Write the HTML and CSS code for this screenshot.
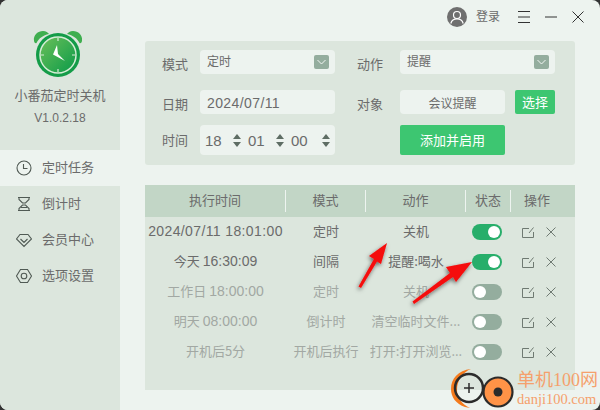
FILE: index.html
```html
<!DOCTYPE html>
<html lang="zh">
<head>
<meta charset="utf-8">
<title>小番茄定时关机</title>
<link rel="stylesheet" href="styles.css">
</head>
<body>
<div class="window">
  <aside class="sidebar">
    <div class="brand">
      <svg class="logo" viewBox="0 0 50 50" width="50" height="50">
        <defs><linearGradient id="g" x1="0" y1="0" x2="1" y2="1"><stop offset="0" stop-color="#6cc05a"/><stop offset="1" stop-color="#0a9a48"/></linearGradient></defs>
        <path d="M1 13C0 7 5 3 10 3c3 0 5 1.500 6 3C10 7.500 6 10 3.500 15 2.500 15.500 1.500 15 1 13z" fill="#3fae4f"/>
        <path d="M49 13C50 7 45 3 40 3c-3 0-5 1.500-6 3 6 1.500 10 4 12.500 9 1 .5 2 0 2.500-2z" fill="#3fae4f"/>
        <circle cx="25" cy="27" r="22" fill="#149c48"/>
        <circle cx="25" cy="27" r="18" fill="url(#g)" stroke="#d5ecd5" stroke-width="1.500"/>
        <path d="M25 10v3M25 41v3M8 27h3M39 27h3" stroke="#d5ecd5" stroke-width="1.200"/>
        <path d="M24 17L20 26.500 32 33 25 26z" fill="#fff"/>
      </svg>
      <div class="app-name">小番茄定时关机</div>
      <div class="version">V1.0.2.18</div>
    </div>
    <nav class="nav">
      <a class="nav-item active">
        <svg class="nav-icon" viewBox="0 0 16 16"><circle cx="8" cy="8" r="7"/><path d="M7.500 4v4.500h4"/></svg>
        <span class="nav-text">定时任务</span>
      </a>
      <a class="nav-item">
        <svg class="nav-icon" viewBox="0 0 16 16"><path d="M2 1.500h12M2 14.500h12M3 1.500v2L6.500 7h3L13 3.500v-2M3 14.500v-2L6.500 9h3l3.500 3.500v2M5 11.500h6"/></svg>
        <span class="nav-text">倒计时</span>
      </a>
      <a class="nav-item">
        <svg class="nav-icon" viewBox="0 0 16 16"><path d="M4 2.500h8L15.500 7 8 14.500.5 7zM4.500 7L8 10.500 11.500 7"/></svg>
        <span class="nav-text">会员中心</span>
      </a>
      <a class="nav-item">
        <svg class="nav-icon" viewBox="0 0 16 16"><path d="M4.500 1.500h7L15.500 8l-4 6.500h-7L.5 8z"/><circle cx="8" cy="8" r="2.800"/></svg>
        <span class="nav-text">选项设置</span>
      </a>
    </nav>
  </aside>

  <main class="main">
    <header class="topbar">
      <svg class="avatar" viewBox="0 0 20 20" width="20" height="20"><circle cx="10" cy="10" r="10" fill="#6f6f6f"/><circle cx="10" cy="8" r="3.500" fill="none" stroke="#fff" stroke-width="1.200"/><path d="M3.800 16.500c.8-3 3-4.600 6.200-4.600s5.400 1.600 6.200 4.600" fill="none" stroke="#fff" stroke-width="1.200"/></svg>
      <span class="login">登录</span>
      <svg class="win-btn first" viewBox="0 0 12 12"><path d="M0 .5h12M0 6h12M0 11.500h12"/></svg>
      <svg class="win-btn" viewBox="0 0 12 12"><path d="M0 6h12"/></svg>
      <svg class="win-btn" viewBox="0 0 12 12"><path d="M.5.500l11 11M11.500.5l-11 11"/></svg>
    </header>

    <section class="form">
      <div class="form-row">
        <label class="form-label">模式</label>
        <div class="field select left-field"><span>定时</span><i class="drop"><svg viewBox="0 0 15 14"><path d="M3.500 5l4 4 4-4"/></svg></i></div>
        <label class="form-label right-label">动作</label>
        <div class="field select right-field"><span>提醒</span><i class="drop"><svg viewBox="0 0 15 14"><path d="M3.500 5l4 4 4-4"/></svg></i></div>
      </div>
      <div class="form-row second">
        <label class="form-label">日期</label>
        <div class="field date left-field">2024/07/11</div>
        <label class="form-label right-label">对象</label>
        <div class="target right-field">
          <div class="field center">会议提醒</div>
          <button class="pick">选择</button>
        </div>
      </div>
      <div class="form-row third">
        <label class="form-label time-label">时间</label>
        <div class="field time left-field">
          <span class="num">18</span><i class="spin"></i>
          <span class="num">01</span><i class="spin"></i>
          <span class="num">00</span><i class="spin"></i>
        </div>
        <button class="add">添加并启用</button>
      </div>
    </section>

    <section class="table">
      <div class="row head">
        <div>执行时间</div><div>模式</div><div>动作</div><div>状态</div><div class="op-head">操作</div>
      </div>
      <div class="row">
        <div class="when"><b class="wide">2024/07/11 18:01:00</b></div><div class="cell">定时</div><div class="cell">关机</div>
        <div><i class="toggle on"></i></div>
        <div class="ops"><svg class="op" viewBox="0 0 12 11"><path d="M7 1.500H.5v9h11V5M7 6l4.500-5.500"/></svg><svg class="op x" viewBox="0 0 10 10"><path d="M.5.500l9 9M9.500.5l-9 9"/></svg></div>
      </div>
      <div class="row">
        <div class="when">今天 <b>16:30:09</b></div><div class="cell">间隔</div><div class="cell">提醒:喝水</div>
        <div><i class="toggle on"></i></div>
        <div class="ops"><svg class="op" viewBox="0 0 12 11"><path d="M7 1.500H.5v9h11V5M7 6l4.500-5.500"/></svg><svg class="op x" viewBox="0 0 10 10"><path d="M.5.500l9 9M9.500.5l-9 9"/></svg></div>
      </div>
      <div class="row off">
        <div class="when">工作日 <b>18:00:00</b></div><div class="cell">定时</div><div class="cell">关机</div>
        <div><i class="toggle"></i></div>
        <div class="ops"><svg class="op" viewBox="0 0 12 11"><path d="M7 1.500H.5v9h11V5M7 6l4.500-5.500"/></svg><svg class="op x" viewBox="0 0 10 10"><path d="M.5.500l9 9M9.500.5l-9 9"/></svg></div>
      </div>
      <div class="row off">
        <div class="when">明天 <b>08:00:00</b></div><div class="cell">倒计时</div><div class="cell">清空临时文件...</div>
        <div><i class="toggle"></i></div>
        <div class="ops"><svg class="op" viewBox="0 0 12 11"><path d="M7 1.500H.5v9h11V5M7 6l4.500-5.500"/></svg><svg class="op x" viewBox="0 0 10 10"><path d="M.5.500l9 9M9.500.5l-9 9"/></svg></div>
      </div>
      <div class="row off">
        <div class="when">开机后5分</div><div class="cell">开机后执行</div><div class="cell">打开:打开浏览...</div>
        <div><i class="toggle"></i></div>
        <div class="ops"><svg class="op" viewBox="0 0 12 11"><path d="M7 1.500H.5v9h11V5M7 6l4.500-5.500"/></svg><svg class="op x" viewBox="0 0 10 10"><path d="M.5.500l9 9M9.500.5l-9 9"/></svg></div>
      </div>
    </section>
  </main>

  <svg class="arrows" viewBox="0 0 600 410" width="600" height="410">
    <defs><filter id="s" x="-30%" y="-30%" width="160%" height="160%"><feDropShadow dx="-1" dy="2" stdDeviation="2" flood-color="#000" flood-opacity=".55"/></filter></defs>
    <g fill="#f50a0a" filter="url(#s)">
      <path d="M387 243L369 256 374 259 358.500 286.500 361 288 377 261.500 381 264z"/>
      <path d="M472 262L446 267 450 273 412.500 301.500 414 304 453 277 456 282z"/>
    </g>
    <g>
      <path d="M471 369C458 370 451 379 451 389c0 8 5 15 14 18l5 1c-8-4-13-10-13-18 0-10 6-18 14-21z" fill="#f47a1c"/>
      <circle cx="469" cy="388" r="14" fill="none" stroke="#2b2b2b" stroke-width="2.500"/>
      <path d="M469 383v10M464 388h10" stroke="#2b2b2b" stroke-width="1.500"/>
      <circle cx="498" cy="392" r="14.500" fill="#ff9347" stroke="#2b2b2b" stroke-width="2.200"/>
      <circle cx="498" cy="392" r="4.500" fill="#2b2b2b"/>
    </g>
  </svg>
  <div class="mark-text">
    <div class="mark-cn">单机100网</div>
    <div class="mark-en">danji100.com</div>
  </div>
</div>
</body>
</html>
```
FILE: styles.css
```css
* { box-sizing: border-box; }
html, body { margin: 0; padding: 0; }
body { width: 600px; height: 410px; overflow: hidden; background: #333; font-family: "Noto Sans CJK SC", "Liberation Sans", sans-serif; font-size: 13px; color: #6b6b6b; }
.window { position: relative; display: flex; width: 600px; height: 410px; background: #edf3ef; border-radius: 8px; overflow: hidden; }

.sidebar { width: 120px; flex: none; background: #dce6dd; display: flex; flex-direction: column; }
.brand { display: flex; flex-direction: column; align-items: center; padding-top: 28px; height: 150px; }
.logo { display: block; margin-right: 4px; }
.app-name { margin-top: 7px; line-height: 20px; white-space: nowrap; }
.version { margin-top: 5px; font-family: "Liberation Sans", sans-serif; font-size: 12px; line-height: 16px; }
.nav { display: flex; flex-direction: column; }
.nav-item { display: flex; align-items: center; height: 36px; padding-left: 16px; gap: 10px; }
.nav-item.active { background: #edf3ef; }
.nav-text { padding-bottom: 4px; }
.nav-icon { width: 16px; height: 16px; fill: none; stroke: #505a54; stroke-width: 1.100; }

.main { flex: 1; padding: 0 25px; min-width: 0; }
.topbar { display: flex; align-items: center; height: 41px; margin-right: -9px; padding-bottom: 7px; justify-content: flex-end; }
.login { margin-left: 9px; font-size: 12px; padding-bottom: 4px; }
.avatar { display: block; }
.win-btn { width: 12px; height: 12px; margin-left: 15px; fill: none; stroke: #333; stroke-width: 1; }
.win-btn.first { margin-left: 18px; }

.form { display: flex; flex-direction: column; padding: 9px 20px 0 17px; background: #dce6dd; border-radius: 3px; height: 124px; width: 430px; }
.form-row { display: flex; height: 24px; }
.form-row.second { margin-top: 16px; }
.form-row.third { margin-top: 11px; height: 30px; }
.form-label { width: 38px; flex: none; line-height: 24px; padding-top: 2px; }
.time-label { line-height: 24px; padding-top: 3px; }
.right-label { width: 43px; margin-left: 22px; }
.left-field { width: 135px; flex: none; }
.right-field { width: 155px; flex: none; }
.field { background: #edf3ef; border-radius: 4px; height: 24px; display: flex; align-items: center; padding: 0 7px; font-size: 12px; }
.select { justify-content: space-between; padding-right: 6px; line-height: 20px; }
.select span { padding-bottom: 2px; }
.drop { display: flex; width: 15px; height: 14px; background: #94ad9e; border-radius: 2px; }
.drop svg { width: 15px; height: 14px; fill: none; stroke: #f2f6f3; stroke-width: 1; }
.date { font-family: "Liberation Sans", sans-serif; font-size: 14px; letter-spacing: .4px; padding-top: 1px; }
.target { display: flex; gap: 10px; }
.center { flex: 1; justify-content: center; }
.pick { width: 40px; height: 24px; border: 0; padding: 0 0 2px; background: #3dc671; color: #fff; font: 13px "Noto Sans CJK SC", sans-serif; border-radius: 2px; }
.time { height: 30px; padding: 0 5px; font-family: "Liberation Sans", sans-serif; font-size: 15px; }
.num { width: 28px; flex: none; }
.spin { position: relative; width: 8px; height: 13px; margin-right: 7px; flex: none; }
.spin:last-child { margin-right: 0; margin-left: 3px; }
.spin::before, .spin::after { content: ""; position: absolute; left: 0; border-left: 4px solid transparent; border-right: 4px solid transparent; }
.spin::before { top: 0; border-bottom: 5px solid #5e6d64; }
.spin::after { bottom: 0; border-top: 5px solid #5e6d64; }
.add { width: 105px; height: 30px; margin-left: 65px; border: 0; padding: 0 0 2px; background: #3dc671; color: #fff; font: 13px "Noto Sans CJK SC", sans-serif; border-radius: 2px; }

.table { margin-top: 20px; height: 205px; width: 430px; background: #dce6dd; }
.row { display: grid; grid-template-columns: 141px 80px 100px 45px 64px; height: 30px; align-items: center; text-align: center; white-space: nowrap; font-size: 13px; }
.when { padding-bottom: 3px; }
.when b { font-family: "Liberation Sans", sans-serif; font-size: 14px; font-weight: 400; }
.when b.wide { letter-spacing: .38px; }
.cell { padding-bottom: 3px; }
.head { height: 32px; background: #c2d6c6; }
.head > div { border-right: 1px solid #eef4f0; height: 22px; line-height: 20px; }
.head > .op-head { border-right: 0; padding-right: 12px; }
.off { color: #a2a8a3; }
.toggle { display: block; width: 30px; height: 16px; margin-left: 6px; border-radius: 8px; background: #94ad9e; position: relative; }
.toggle::after { content: ""; position: absolute; top: 2px; left: 2px; width: 12px; height: 12px; border-radius: 50%; background: #fff; }
.toggle.on { background: #27ae6a; }
.toggle.on::after { left: 16px; }
.ops { display: flex; align-items: center; padding-left: 11px; gap: 12px; }
.op { width: 12px; height: 11px; fill: none; stroke: #6f7a72; stroke-width: 1; }
.op.x { width: 10px; height: 10px; }

.arrows { position: absolute; left: 0; top: 0; pointer-events: none; }
.mark-text { position: absolute; left: 517px; top: 368px; color: #f5a06c; white-space: nowrap; }
.mark-cn { font-family: "Liberation Serif", "Noto Sans CJK SC", serif; font-size: 18px; line-height: 24px; }
.mark-en { font-family: "Liberation Serif", serif; font-size: 14.5px; line-height: 15px; }
```
